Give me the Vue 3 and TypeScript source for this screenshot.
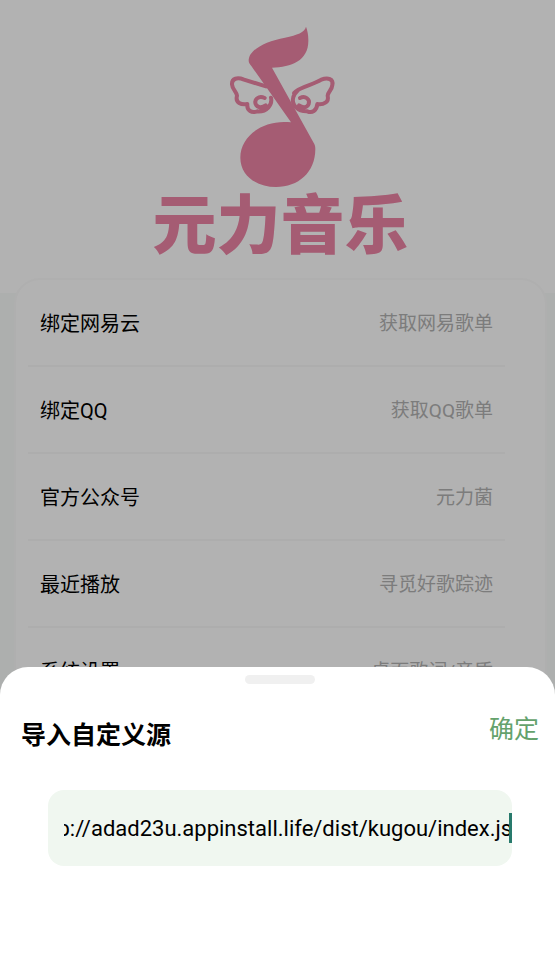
<script setup lang="ts">
import { onMounted, ref } from 'vue'

interface MenuRow {
  label: string
  hint: string
}

const rows: MenuRow[] = [
  { label: '绑定网易云', hint: '获取网易歌单' },
  { label: '绑定QQ', hint: '获取QQ歌单' },
  { label: '官方公众号', hint: '元力菌' },
  { label: '最近播放', hint: '寻觅好歌踪迹' },
  { label: '系统设置', hint: '桌面歌词/音质' },
]

const source = ref('http://adad23u.appinstall.life/dist/kugou/index.js')
const field = ref<HTMLInputElement | null>(null)

// Keep the end of a long address in view.
onMounted(() => {
  if (field.value) field.value.scrollLeft = field.value.scrollWidth
})
</script>

<template>
  <div class="page">
    <header class="brand">
      <svg class="note" viewBox="0 0 375 540" aria-hidden="true">
        <g class="wings">
          <path d="M138 214 L72 194 C52 186 35 190 36 208 C37 224 50 230 51 242 C45 264 64 270 82 267 C80 288 96 295 112 289 C140 291 158 270 153 248 M134 249 C116 241 102 253 107 267 C112 279 126 279 137 271" />
          <path d="M222 234 C240 214 280 210 304 194 C324 186 341 192 337 210 C336 225 324 230 323 242 C328 262 310 270 292 267 C290 288 276 295 262 289 C234 290 213 270 220 246 C222 240 224 235 232 228 M240 249 C256 241 271 253 266 267 C261 279 248 279 237 271" />
        </g>
        <path class="body" d="M258 35 C254 52 232 60 195 68 C135 79 86 105 86 137 C86 143 90 147 94 153 L213 322 C133 312 61 361 61 428 C61 482 110 516 168 516 C235 516 286 472 286 402 C286 393 284 388 280 382 L156 158 C215 157 267 137 265 74 C265 59 262 45 258 35 Z" />
      </svg>
      <h1 class="name">元力音乐</h1>
    </header>

    <main class="backdrop">
      <ul class="card">
        <li v-for="row in rows" :key="row.label">
          <button class="row" type="button">
            <span class="label">{{ row.label }}</span>
            <span class="hint">{{ row.hint }}</span>
          </button>
        </li>
      </ul>
    </main>

    <div class="mask"></div>

    <form class="sheet" @submit.prevent>
      <span class="handle"></span>
      <div class="head">
        <label class="title" for="source">导入自定义源</label>
        <button class="confirm" type="submit">确定</button>
      </div>
      <div class="field">
        <input id="source" ref="field" v-model="source" class="input" type="text" spellcheck="false" autocomplete="off" />
        <span class="caret"></span>
      </div>
    </form>
  </div>
</template>

<style>
body {
  margin: 0;
}
</style>

<style scoped>
.page {
  position: relative;
  display: flex;
  flex-direction: column;
  height: 100vh;
  overflow: hidden;
  box-sizing: border-box;
  background: #fff;
  font-family: Roboto, "Noto Sans CJK SC", sans-serif;
}

.brand {
  display: flex;
  flex-direction: column;
  align-items: center;
  padding: 15px 0 40px 6px;
  color: #ec84a5;
}

.note {
  display: block;
  width: 125px;
  height: 180px;
  margin-left: 4px;
}

.wings path {
  fill: none;
  stroke: currentColor;
  stroke-width: 12;
  stroke-linecap: round;
  stroke-linejoin: round;
}

.body {
  fill: currentColor;
}

.name {
  margin: -8px 0 0;
  font-family: "Noto Sans CJK SC", sans-serif;
  font-size: 64px;
  line-height: 66px;
  font-weight: 900;
}

.backdrop {
  flex: 1 0 auto;
  padding: 0 8px 0 14px;
  background: #f8fbf9;
}

.card {
  margin: -15px 0 0;
  padding: 0 40px 0 12px;
  list-style: none;
  background: #fff;
  border: 2px solid #fbfbfb;
  border-radius: 26px;
}

.row {
  display: flex;
  align-items: center;
  justify-content: space-between;
  box-sizing: border-box;
  width: 100%;
  height: 87px;
  padding: 2px 12px 0;
  border: 0;
  border-bottom: 2px solid #f8f8f8;
  background: none;
  font-family: inherit;
}

.label {
  font-size: 20px;
  line-height: 28px;
  color: #000;
}

.hint {
  font-size: 19px;
  line-height: 28px;
  color: #b2b2b2;
}

.mask {
  position: absolute;
  inset: 0;
  background: rgba(0, 0, 0, 0.3);
}

.sheet {
  position: absolute;
  left: 0;
  right: 0;
  bottom: 0;
  display: flex;
  flex-direction: column;
  padding: 8px 0 88px;
  background: #fff;
  border-radius: 28px 28px 0 0;
}

.handle {
  align-self: center;
  width: 70px;
  height: 9px;
  margin-left: 4px;
  border-radius: 5px;
  background: #f0f0f0;
}

.head {
  display: flex;
  align-items: flex-start;
  justify-content: space-between;
  padding: 28px 16px 0 21px;
}

.title {
  padding-top: 6px;
  font-size: 25px;
  line-height: 36px;
  font-weight: 700;
  color: #000;
}

.confirm {
  padding: 0;
  border: 0;
  background: none;
  font-family: inherit;
  font-size: 25px;
  line-height: 36px;
  color: #64a26c;
}

.field {
  position: relative;
  display: flex;
  margin: 36px 43px 0 48px;
  padding-left: 16px;
  background: #f0f7f0;
  border-radius: 16px;
}

.input {
  flex: 1;
  min-width: 0;
  height: 76px;
  padding: 0;
  border: 0;
  outline: 0;
  background: none;
  font-family: inherit;
  font-size: 22px;
  color: #000;
}

.caret {
  position: absolute;
  right: 0;
  top: 23px;
  width: 3px;
  height: 30px;
  background: #287a6c;
}
</style>
